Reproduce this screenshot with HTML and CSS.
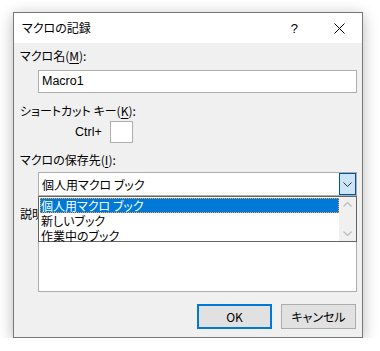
FILE: index.html
```html
<!DOCTYPE html>
<html lang="ja">
<head>
  <meta charset="UTF-8" />
  <title>マクロの記録</title>
  <link rel="stylesheet" href="styles.css">
</head>
<body>
  <div class="dialog">

    <!-- Title bar -->
    <div class="titlebar">
      <span class="title">マクロの記録</span>
      <span class="help">?</span>
      <span class="close">
        <svg width="11" height="11" viewBox="0 0 11 11">
          <path d="M0.5 0.5 L10.5 10.5 M10.5 0.5 L0.5 10.5" stroke="#000" stroke-width="1" fill="none"/>
        </svg>
      </span>
    </div>

    <div class="content">
      <div class="label lbl-name">マクロ名(<u>M</u>):</div>
      <div class="textbox name-box">Macro1</div>

      <div class="label lbl-key">ショートカット キー(<u>K</u>):</div>
      <div class="shortcut-row">
        <span class="ctrl">Ctrl+</span>
        <span class="key-box"></span>
      </div>

      <div class="label lbl-store">マクロの保存先(<u>I</u>):</div>
      <div class="combo">
        <span class="combo-text">個人用マクロ ブック</span>
        <span class="combo-btn">
          <svg width="9" height="5" viewBox="0 0 9 5">
            <path d="M0.5 0.5 L4.5 4.5 L8.5 0.5" stroke="#333" stroke-width="1" fill="none"/>
          </svg>
        </span>

        <!-- Open dropdown list, drawn over the description label -->
        <div class="droplist">
          <div class="items">
            <div class="item selected">個人用マクロ ブック</div>
            <div class="item">新しいブック</div>
            <div class="item">作業中のブック</div>
          </div>
          <div class="scrollbar">
            <svg width="9" height="5" viewBox="0 0 9 5">
              <path d="M0.5 4.5 L4.5 0.5 L8.5 4.5" stroke="#bfbfbf" stroke-width="1.4" fill="none"/>
            </svg>
            <svg width="9" height="5" viewBox="0 0 9 5">
              <path d="M0.5 0.5 L4.5 4.5 L8.5 0.5" stroke="#bfbfbf" stroke-width="1.4" fill="none"/>
            </svg>
          </div>
        </div>
      </div>

      <div class="label lbl-desc">説明(<u>D</u>):</div>
      <div class="textbox desc-box"></div>

      <div class="buttons">
        <button class="btn default">OK</button>
        <button class="btn">キャンセル</button>
      </div>
    </div>

  </div>
</body>
</html>
```

FILE: styles.css
```css
body {
  margin: 0;
  padding: 12px 0 0 13px;
  background: #fff;
  font-family: "Noto Sans CJK JP", "Noto Sans", sans-serif;
  font-feature-settings: "palt";
  font-size: 12px;
  color: #000;
}
.dialog {
  width: 348px;
  border: 1px solid #777;
  background: #f0f0f0;
  box-shadow: 0 3px 14px rgba(0,0,0,0.28);
}
/* Title bar */
.titlebar {
  height: 30px;
  background: #fff;
  display: flex;
  align-items: center;
  padding-left: 8px;
}
.title {
  flex: 1;
  line-height: 16px;
}
.help {
  font-family: "Liberation Sans", sans-serif;
  font-size: 13px;
  margin-right: 36px;
}
.close {
  display: flex;
  margin-right: 17px;
}
/* Body */
.content {
  padding: 5px 5px 8px 6px;
}
.label {
  line-height: 16px;
  height: 16px;
}
.label u {
  text-decoration-thickness: 1px;
  text-underline-offset: 2px;
}
.textbox {
  margin-left: 18px;
  background: #fff;
  border: 1px solid #adadad;
  box-sizing: border-box;
}
.name-box {
  margin-top: 6px;
  height: 23px;
  line-height: 21px;
  padding-left: 3px;
  font-family: "Liberation Sans", sans-serif;
  font-size: 12.5px;
}
.lbl-key {
  margin-top: 10px;
}
.shortcut-row {
  margin-top: 2px;
  height: 22px;
  display: flex;
  align-items: center;
  padding-left: 55px;
}
.ctrl {
  font-family: "Liberation Sans", sans-serif;
  font-size: 12.5px;
  width: 35px;
}
.key-box {
  width: 23px;
  height: 22px;
  box-sizing: border-box;
  border: 1px solid #adadad;
  background: #fff;
}
.lbl-store {
  margin-top: 9px;
}
/* Combo box with open list */
.combo {
  position: relative;
  margin: 4px 0 0 18px;
  height: 24px;
  box-sizing: border-box;
  border: 1px solid #adadad;
  background: #fff;
  display: flex;
  align-items: center;
}
.combo-text {
  flex: 1;
  padding-left: 3px;
}
.combo-btn {
  width: 17px;
  height: 22px;
  box-sizing: border-box;
  background: #cce4f7;
  border: 1px solid #005499;
  display: flex;
  align-items: center;
  justify-content: center;
}
.droplist {
  position: absolute;
  left: -1px;
  right: -1px;
  top: 23px;
  height: 46px;
  box-sizing: border-box;
  border: 1px solid #646464;
  background: #fff;
  display: flex;
  z-index: 2;
}
.items {
  flex: 1;
  padding: 1px 0 0 1px;
}
.item {
  height: 15px;
  line-height: 15px;
  padding-left: 1px;
}
.item.selected {
  background: #0078d7;
  color: #fff;
  outline: 1px dotted #f7a440;
  outline-offset: -1px;
}
.scrollbar {
  width: 17px;
  background: #f0f0f0;
  display: flex;
  flex-direction: column;
  justify-content: space-between;
  align-items: center;
  padding: 5px 0 5px 0;
}
.lbl-desc {
  margin-top: 10px;
}
.desc-box {
  margin-top: 4px;
  height: 66px;
}
/* Buttons */
.buttons {
  margin-top: 12px;
  display: flex;
  justify-content: flex-end;
  gap: 9px;
  padding-right: 1px;
}
.btn {
  width: 75px;
  height: 25px;
  box-sizing: border-box;
  background: #e1e1e1;
  border: 1px solid #adadad;
  font-family: "Noto Sans CJK JP", sans-serif;
  font-feature-settings: "palt";
  font-size: 12px;
  color: #000;
  padding: 0;
}
.btn.default {
  border: 2px solid #0078d7;
}
```
